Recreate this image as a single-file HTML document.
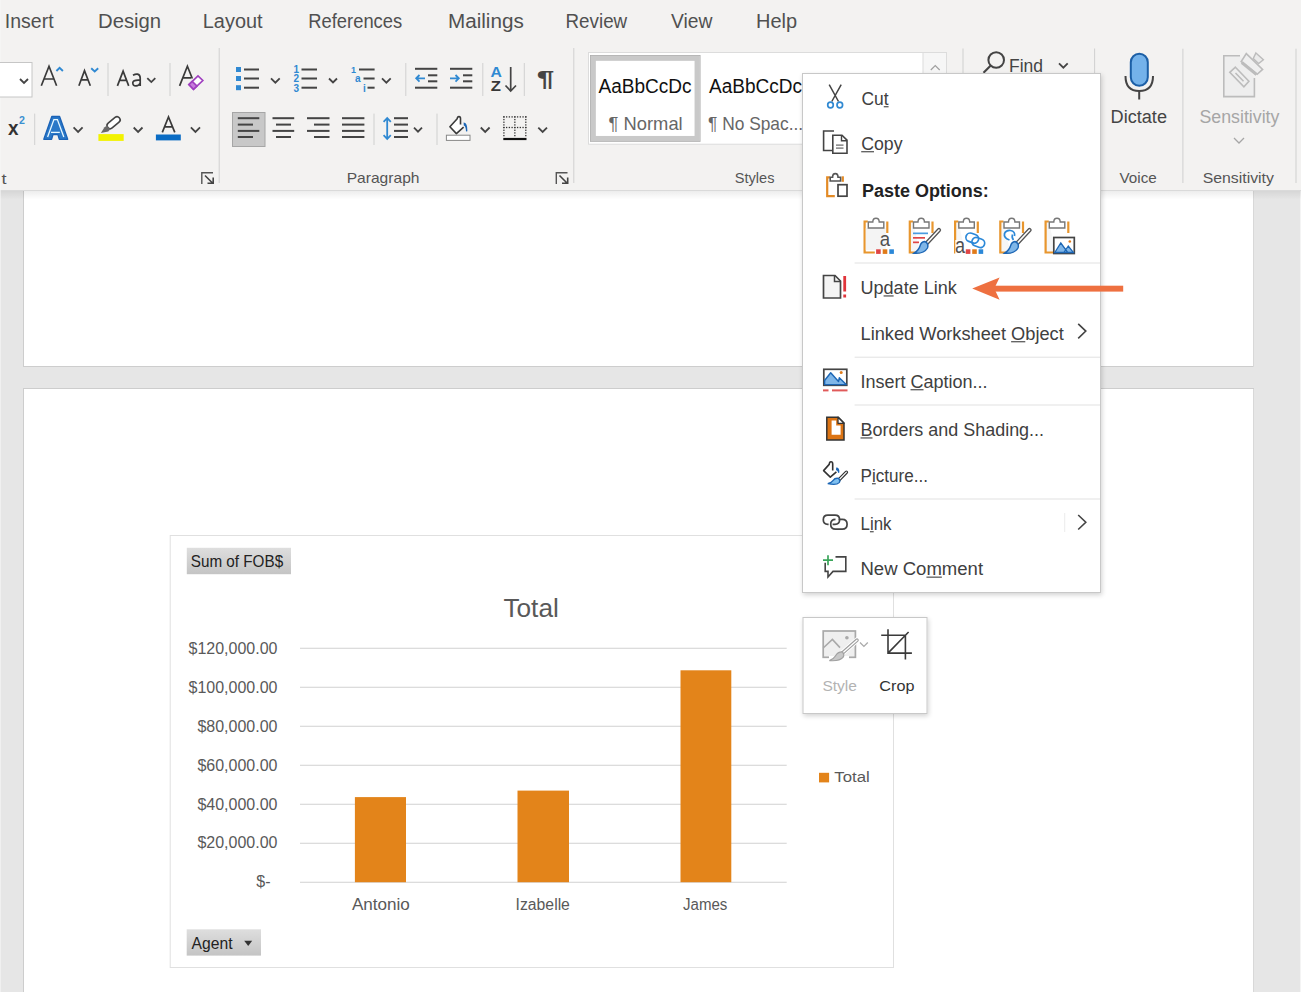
<!DOCTYPE html>
<html><head><meta charset="utf-8"><title>Word - Update Link</title>
<style>
html,body{margin:0;padding:0;width:1301px;height:992px;overflow:hidden;background:#e6e6e6;}
svg{display:block;font-family:"Liberation Sans",sans-serif;}
</style></head><body>
<svg width="1301" height="992" viewBox="0 0 1301 992">
<rect x="0" y="0" width="1301" height="992" fill="#e6e6e6"/>
<rect x="0" y="0" width="1301" height="190" fill="#f3f2f1"/>
<rect x="23" y="185" width="1231" height="182" fill="#cdcdcd"/><rect x="24" y="185" width="1229" height="181" fill="#fff"/><rect x="1253" y="185" width="1" height="182" fill="#d8d8d8"/>
<rect x="23" y="388" width="1231" height="620" fill="#cdcdcd"/><rect x="24" y="389" width="1229" height="620" fill="#fff"/><rect x="1253" y="389" width="1" height="620" fill="#d8d8d8"/>
<rect x="1300" y="190" width="1" height="802" fill="#f4f4f4"/>
<defs><linearGradient id="rsh" x1="0" y1="0" x2="0" y2="1"><stop offset="0" stop-color="#000" stop-opacity="0.07"/><stop offset="1" stop-color="#000" stop-opacity="0"/></linearGradient><linearGradient id="btn" x1="0" y1="0" x2="0" y2="1"><stop offset="0" stop-color="#dedede"/><stop offset="1" stop-color="#c4c4c4"/></linearGradient><filter id="msh" x="-10%" y="-10%" width="120%" height="120%"><feGaussianBlur in="SourceAlpha" stdDeviation="2.5"/><feOffset dx="1" dy="2"/><feComponentTransfer><feFuncA type="linear" slope="0.18"/></feComponentTransfer><feMerge><feMergeNode/><feMergeNode in="SourceGraphic"/></feMerge></filter></defs>
<rect x="0" y="191" width="1301" height="8.5" fill="url(#rsh)"/>
<rect x="0" y="0" width="1301" height="190" fill="#f3f2f1"/>
<rect x="0" y="190" width="1301" height="1" fill="#dadada"/>
<rect x="0" y="0" width="1" height="992" fill="#f6f6f6" opacity="0.6"/>
<rect x="170.2" y="535.5" width="723.3" height="432" fill="#fff" stroke="#e0e0e0" stroke-width="1"/>
<rect x="186.8" y="547.8" width="104.2" height="26.4" fill="url(#btn)"/>
<rect x="186.7" y="929.3" width="74.3" height="26.3" fill="url(#btn)"/>
<polygon points="244.2,940.8 252.2,940.8 248.2,946" fill="#333"/>
<rect x="300" y="647.70" width="486.7" height="1.2" fill="#d9d9d9"/>
<rect x="300" y="686.70" width="486.7" height="1.2" fill="#d9d9d9"/>
<rect x="300" y="725.70" width="486.7" height="1.2" fill="#d9d9d9"/>
<rect x="300" y="764.70" width="486.7" height="1.2" fill="#d9d9d9"/>
<rect x="300" y="803.70" width="486.7" height="1.2" fill="#d9d9d9"/>
<rect x="300" y="842.70" width="486.7" height="1.2" fill="#d9d9d9"/>
<rect x="300" y="881.70" width="486.7" height="1.2" fill="#d9d9d9"/>
<rect x="354.9" y="797.1" width="51.1" height="85.1" fill="#e3841a"/>
<rect x="517.5" y="790.6" width="51.5" height="91.6" fill="#e3841a"/>
<rect x="680.5" y="670.3" width="50.8" height="211.9" fill="#e3841a"/>
<rect x="819" y="772.8" width="10.1" height="9.6" fill="#e3841a"/>
<rect x="-1" y="62.5" width="33" height="34.5" fill="#fff" stroke="#c6c6c6" stroke-width="1"/>
<polyline points="20,79.0 24.0,83.0 28,79.0" fill="none" stroke="#444" stroke-width="1.8"/>
<path d="M41.3,85.8 L49,66.3 L56.6,85.8 M44.2,79 H53.8" fill="none" stroke="#3a3a3a" stroke-width="1.7" stroke-linejoin="miter"/>
<polyline points="56.4,71 59.6,67.8 62.9,71" fill="none" stroke="#3089d2" stroke-width="1.9"/>
<path d="M78.9,85.8 L84.5,70.7 L90.3,85.8 M81.2,79.8 H87.9" fill="none" stroke="#3a3a3a" stroke-width="1.7" stroke-linejoin="miter"/>
<polyline points="91.2,68.3 94.7,71.5 98.2,68.3" fill="none" stroke="#3089d2" stroke-width="1.9"/>
<path d="M117.4,85.9 L123.1,71.2 L128.7,85.9 M119.6,80.4 H126.6" fill="none" stroke="#3a3a3a" stroke-width="1.7" stroke-linejoin="miter"/>
<path d="M133,75.3 Q135.5,73.8 137.5,74.1 Q140.2,74.6 140.2,78 V85.9 M140.2,80.2 Q133.3,79.6 132.8,82.6 Q132.6,85.9 136,85.9 Q139,85.8 140.2,83" fill="none" stroke="#3a3a3a" stroke-width="1.7" stroke-linejoin="miter"/>
<rect x="107.5" y="63" width="1" height="33" fill="#d0d0d0"/>
<polyline points="147.3,78.1 151.3,82.1 155.3,78.1" fill="none" stroke="#444" stroke-width="1.8"/>
<rect x="169.5" y="63" width="1" height="33" fill="#d0d0d0"/>
<path d="M179.6,85.9 L187.4,66.2 L192.3,78.5 M182.5,77.9 H191" fill="none" stroke="#3a3a3a" stroke-width="1.7" stroke-linejoin="miter"/>
<polygon points="188.9,84.6 198,75.9 202.8,80.5 193.5,89.4" fill="#fff" stroke="#a040c0" stroke-width="1.7"/>
<polygon points="188.9,84.6 192.2,81.5 196.9,86 193.5,89.4" fill="#c77ddc" stroke="#a040c0" stroke-width="1.7"/>
<rect x="218.7" y="48" width="1" height="135" fill="#d0d0d0"/>
<rect x="236" y="67.0" width="5" height="5" fill="#3089d2"/>
<rect x="244" y="68.5" width="15" height="2" fill="#444"/>
<rect x="236" y="76.0" width="5" height="5" fill="#3089d2"/>
<rect x="244" y="77.5" width="15" height="2" fill="#444"/>
<rect x="236" y="85.2" width="5" height="5" fill="#3089d2"/>
<rect x="244" y="86.7" width="15" height="2" fill="#444"/>
<polyline points="271,78.325 275.35,82.675 279.7,78.325" fill="none" stroke="#444" stroke-width="1.8"/>
<text x="293.5" y="73.3" font-size="10" font-weight="700" fill="#3089d2" font-family="Liberation Sans">1</text>
<rect x="301.5" y="68.5" width="15.5" height="2" fill="#444"/>
<text x="293.5" y="82.3" font-size="10" font-weight="700" fill="#3089d2" font-family="Liberation Sans">2</text>
<rect x="301.5" y="77.5" width="15.5" height="2" fill="#444"/>
<text x="293.5" y="91.5" font-size="10" font-weight="700" fill="#3089d2" font-family="Liberation Sans">3</text>
<rect x="301.5" y="86.7" width="15.5" height="2" fill="#444"/>
<polyline points="329,78.5 333.0,82.5 337,78.5" fill="none" stroke="#444" stroke-width="1.8"/>
<text x="351" y="72.5" font-size="9" font-weight="700" fill="#3089d2" font-family="Liberation Sans">1</text>
<text x="355" y="82" font-size="10" font-weight="700" fill="#3089d2" font-family="Liberation Sans">a</text>
<text x="363" y="91.5" font-size="10" font-weight="700" fill="#3089d2" font-family="Liberation Sans">i</text>
<rect x="359" y="68.5" width="15.600000000000023" height="2" fill="#444"/>
<rect x="363.5" y="77.5" width="11.100000000000023" height="2" fill="#444"/>
<rect x="367.5" y="86.7" width="7.100000000000023" height="2" fill="#444"/>
<polyline points="382,78.325 386.35,82.675 390.7,78.325" fill="none" stroke="#444" stroke-width="1.8"/>
<rect x="405.3" y="63" width="1" height="33" fill="#d0d0d0"/>
<rect x="415" y="67.8" width="22.30000000000001" height="2" fill="#444"/>
<rect x="428" y="74.3" width="9.300000000000011" height="2" fill="#444"/>
<rect x="428" y="80.3" width="9.300000000000011" height="2" fill="#444"/>
<rect x="415" y="86.7" width="22.30000000000001" height="2" fill="#444"/>
<path d="M425,78.3 H416.5 M419.5,75 L416.2,78.3 L419.5,81.6" fill="none" stroke="#3089d2" stroke-width="1.8"/>
<rect x="450" y="67.8" width="22.30000000000001" height="2" fill="#444"/>
<rect x="463" y="74.3" width="9.300000000000011" height="2" fill="#444"/>
<rect x="463" y="80.3" width="9.300000000000011" height="2" fill="#444"/>
<rect x="450" y="86.7" width="22.30000000000001" height="2" fill="#444"/>
<path d="M450,78.3 H458.5 M455.5,75 L458.8,78.3 L455.5,81.6" fill="none" stroke="#3089d2" stroke-width="1.8"/>
<rect x="482.3" y="63" width="1" height="33" fill="#d0d0d0"/>
<path d="M510.7,67 V91 M505.5,85.5 L510.7,91 L516,85.5" fill="none" stroke="#444" stroke-width="1.7"/>
<rect x="523.8" y="63" width="1" height="33" fill="#d0d0d0"/>
<rect x="573.3" y="48" width="1" height="135" fill="#d0d0d0"/>
<rect x="34.2" y="113.6" width="1" height="31.400000000000006" fill="#d0d0d0"/>
<path d="M43.8,139.3 L51.8,116.5 H59.6 L67.7,139.3 H59.3 L57.9,134.6 H53 L51.6,139.3 Z" fill="#2a78c8" stroke="#1a62b6" stroke-width="1.3" stroke-linejoin="round"/>
<path d="M47.6,137 L53.9,119.6 H57.4 L63.8,137 M51,132.3 H59.8" fill="none" stroke="#e6f7ff" stroke-width="1.3"/>
<polyline points="73.6,127.44999999999999 78.1,131.95 82.6,127.44999999999999" fill="none" stroke="#444" stroke-width="1.8"/>
<g transform="translate(113.6,122.7) rotate(-40)"><rect x="-7.5" y="-3.1" width="15" height="6.2" rx="3" fill="#fff" stroke="#444" stroke-width="1.6"/></g>
<polygon points="100.9,132.9 104.5,127.2 107,125.4 110.2,129.2 108.3,131.5" fill="#6a6a6a"/>
<rect x="98.4" y="134.1" width="25.3" height="6.8" fill="#f2f200"/>
<polyline points="133.7,127.49999999999999 138.1,131.89999999999998 142.5,127.49999999999999" fill="none" stroke="#444" stroke-width="1.8"/>
<path d="M162.3,132.4 L168.5,116.9 L174.8,132.4 M164.8,126.9 H172.3" fill="none" stroke="#3a3a3a" stroke-width="1.7" stroke-linejoin="miter"/>
<rect x="155.9" y="134.5" width="24.9" height="5.9" fill="#0a6cc4"/>
<polyline points="190.9,127.42499999999998 195.45,131.975 200,127.42499999999998" fill="none" stroke="#444" stroke-width="1.8"/>
<path d="M201.8,184 V172.8 H213" fill="none" stroke="#555" stroke-width="1.4"/><path d="M205,175.5 L212.5,183 M207.5,183.2 H213.2 V177.5" fill="none" stroke="#444" stroke-width="1.6"/>
<path d="M556.3,184 V172.8 H567.5" fill="none" stroke="#555" stroke-width="1.4"/><path d="M559.5,175.5 L567.0,183 M562.0,183.2 H567.7 V177.5" fill="none" stroke="#444" stroke-width="1.6"/>
<rect x="232.5" y="112.5" width="32.5" height="34" fill="#c8c8c8" stroke="#a6a6a6" stroke-width="1"/>
<rect x="237.8" y="117.2" width="21.5" height="2" fill="#444"/>
<rect x="272.5" y="117.2" width="21.69999999999999" height="2" fill="#444"/>
<rect x="307" y="117.2" width="22.5" height="2" fill="#444"/>
<rect x="342" y="117.2" width="22.399999999999977" height="2" fill="#444"/>
<rect x="394" y="117.2" width="14" height="2" fill="#444"/>
<rect x="237.8" y="123.6" width="15.199999999999989" height="2" fill="#444"/>
<rect x="276" y="123.6" width="15" height="2" fill="#444"/>
<rect x="314" y="123.6" width="15.5" height="2" fill="#444"/>
<rect x="342" y="123.6" width="22.399999999999977" height="2" fill="#444"/>
<rect x="394" y="123.6" width="14" height="2" fill="#444"/>
<rect x="237.8" y="129.9" width="21.5" height="2" fill="#444"/>
<rect x="272.5" y="129.9" width="21.69999999999999" height="2" fill="#444"/>
<rect x="307" y="129.9" width="22.5" height="2" fill="#444"/>
<rect x="342" y="129.9" width="22.399999999999977" height="2" fill="#444"/>
<rect x="394" y="129.9" width="14" height="2" fill="#444"/>
<rect x="237.8" y="136.0" width="15.199999999999989" height="2" fill="#444"/>
<rect x="276" y="136.0" width="15" height="2" fill="#444"/>
<rect x="314" y="136.0" width="15.5" height="2" fill="#444"/>
<rect x="342" y="136.0" width="22.399999999999977" height="2" fill="#444"/>
<rect x="394" y="136.0" width="14" height="2" fill="#444"/>
<rect x="373.5" y="113.6" width="1" height="31.400000000000006" fill="#d0d0d0"/>
<path d="M387.2,118 V139 M383.6,121.8 L387.2,118 L390.8,121.8 M383.6,135.2 L387.2,139 L390.8,135.2" fill="none" stroke="#3089d2" stroke-width="1.8"/>
<polyline points="414,127.69999999999999 418.0,131.7 422,127.69999999999999" fill="none" stroke="#444" stroke-width="1.8"/>
<rect x="436.5" y="113.6" width="1" height="31.400000000000006" fill="#d0d0d0"/>
<path d="M460.5,124.4 V118.6 Q460.5,116.6 459,116.6 Q457.4,116.6 457.2,118.8 L449.9,126.8 L456.4,133.6 L463.6,127.2" fill="#fff" stroke="#3a3a3a" stroke-width="1.6" stroke-linejoin="round"/>
<path d="M463.6,122.4 Q467.6,122.4 467.4,131.2 L466,131.6 Q465.8,126 463.8,125.6 Z" fill="#1c66b5"/>
<rect x="446.4" y="135.2" width="23.6" height="5.2" fill="#fff" stroke="#888" stroke-width="1"/>
<polyline points="480.8,127.49999999999999 485.20000000000005,131.89999999999998 489.6,127.49999999999999" fill="none" stroke="#444" stroke-width="1.8"/>
<g fill="#333"><rect x="503.25" y="116.25" width="1.3" height="1.3"/><rect x="505.99" y="116.25" width="1.3" height="1.3"/><rect x="508.73" y="116.25" width="1.3" height="1.3"/><rect x="511.46" y="116.25" width="1.3" height="1.3"/><rect x="514.20" y="116.25" width="1.3" height="1.3"/><rect x="516.94" y="116.25" width="1.3" height="1.3"/><rect x="519.67" y="116.25" width="1.3" height="1.3"/><rect x="522.41" y="116.25" width="1.3" height="1.3"/><rect x="525.15" y="116.25" width="1.3" height="1.3"/><rect x="503.25" y="116.25" width="1.3" height="1.3"/><rect x="525.15" y="116.25" width="1.3" height="1.3"/><rect x="514.20" y="116.25" width="1.3" height="1.3"/><rect x="503.25" y="118.92" width="1.3" height="1.3"/><rect x="525.15" y="118.92" width="1.3" height="1.3"/><rect x="514.20" y="118.92" width="1.3" height="1.3"/><rect x="503.25" y="121.59" width="1.3" height="1.3"/><rect x="525.15" y="121.59" width="1.3" height="1.3"/><rect x="514.20" y="121.59" width="1.3" height="1.3"/><rect x="503.25" y="124.26" width="1.3" height="1.3"/><rect x="525.15" y="124.26" width="1.3" height="1.3"/><rect x="514.20" y="124.26" width="1.3" height="1.3"/><rect x="503.25" y="126.94" width="1.3" height="1.3"/><rect x="525.15" y="126.94" width="1.3" height="1.3"/><rect x="514.20" y="126.94" width="1.3" height="1.3"/><rect x="503.25" y="129.61" width="1.3" height="1.3"/><rect x="525.15" y="129.61" width="1.3" height="1.3"/><rect x="514.20" y="129.61" width="1.3" height="1.3"/><rect x="503.25" y="132.28" width="1.3" height="1.3"/><rect x="525.15" y="132.28" width="1.3" height="1.3"/><rect x="514.20" y="132.28" width="1.3" height="1.3"/><rect x="503.25" y="134.95" width="1.3" height="1.3"/><rect x="525.15" y="134.95" width="1.3" height="1.3"/><rect x="514.20" y="134.95" width="1.3" height="1.3"/><rect x="503.25" y="126.85" width="1.3" height="1.3"/><rect x="505.99" y="126.85" width="1.3" height="1.3"/><rect x="508.73" y="126.85" width="1.3" height="1.3"/><rect x="511.46" y="126.85" width="1.3" height="1.3"/><rect x="514.20" y="126.85" width="1.3" height="1.3"/><rect x="516.94" y="126.85" width="1.3" height="1.3"/><rect x="519.67" y="126.85" width="1.3" height="1.3"/><rect x="522.41" y="126.85" width="1.3" height="1.3"/><rect x="525.15" y="126.85" width="1.3" height="1.3"/></g>
<rect x="503.3" y="137.9" width="23.2" height="2.2" fill="#111"/>
<polyline points="538.3,127.52499999999998 542.65,131.875 547,127.52499999999998" fill="none" stroke="#444" stroke-width="1.8"/>
<rect x="588.5" y="52.5" width="358" height="91.7" fill="#fff" stroke="#dcdcdc" stroke-width="1"/>
<rect x="923" y="52.5" width="23.5" height="30" fill="#f6f6f6" stroke="#dcdcdc" stroke-width="1"/>
<polyline points="930.8,70 935.25,65.5 939.7,70" fill="none" stroke="#a0a0a0" stroke-width="1.2"/>
<rect x="590.5" y="55.5" width="109.5" height="85.8" fill="#fff" stroke="#a9a9a9" stroke-width="1"/>
<rect x="593.2" y="58.2" width="104" height="80.4" fill="none" stroke="#c9c9c9" stroke-width="5.3"/>
<rect x="962.5" y="48.5" width="1" height="134.5" fill="#d0d0d0"/>
<circle cx="996.2" cy="60" r="7.8" fill="none" stroke="#444" stroke-width="2"/>
<path d="M990.5,65.8 L983.5,72.8" stroke="#444" stroke-width="2.2"/>
<polyline points="1059,63.32499999999999 1063.35,67.67500000000001 1067.7,63.32499999999999" fill="none" stroke="#444" stroke-width="1.8"/>
<rect x="1094.1" y="48.5" width="1" height="134.5" fill="#d0d0d0"/>
<rect x="1130.8" y="53.7" width="17" height="32" rx="8.5" fill="#74b2ea" stroke="#1c5fa6" stroke-width="2"/>
<path d="M1125.5,76 Q1125.5,91 1139.2,91 Q1153,91 1153,76" fill="none" stroke="#444" stroke-width="2"/>
<rect x="1138.2" y="91" width="2" height="8.5" fill="#444"/>
<rect x="1182.4" y="48.7" width="1" height="134.3" fill="#d0d0d0"/>
<path d="M1240,55.8 H1223.8 V96.6 H1254.4 V78" fill="#eeeeee" stroke="#bcbcbc" stroke-width="1.6"/>
<polygon points="1235.4,67.2 1248.9,81.3 1243.9,86.9 1229.8,72.4" fill="#efefef" stroke="#bcbcbc" stroke-width="1.6"/>
<path d="M1235.5,73 L1243.5,81.3" stroke="#bcbcbc" stroke-width="1.6"/>
<polygon points="1246.3,53.6 1262.6,69.4 1257.2,74.3 1241.2,61.5" fill="#efefef" stroke="#bcbcbc" stroke-width="1.6"/>
<path d="M1241.8,62.5 L1256.5,74.5" stroke="#bcbcbc" stroke-width="3"/>
<polygon points="1255.9,52.9 1263.4,59.8 1258.6,63.6 1253.2,58.6" fill="#ebebeb" stroke="#bcbcbc" stroke-width="1.4"/>
<polyline points="1234,138.0 1239.0,143.0 1244,138.0" fill="none" stroke="#a6a6a6" stroke-width="1.3"/>
<rect x="1295.5" y="48.7" width="1" height="134.3" fill="#d0d0d0"/>
<text x="4.83" y="28.00" font-size="20" font-weight="400" fill="#505050" textLength="48.74" lengthAdjust="spacingAndGlyphs">Insert</text>
<text x="97.99" y="28.00" font-size="20" font-weight="400" fill="#505050" textLength="63.15" lengthAdjust="spacingAndGlyphs">Design</text>
<text x="202.80" y="28.00" font-size="20" font-weight="400" fill="#505050" textLength="59.75" lengthAdjust="spacingAndGlyphs">Layout</text>
<text x="308.28" y="28.00" font-size="20" font-weight="400" fill="#505050" textLength="93.92" lengthAdjust="spacingAndGlyphs">References</text>
<text x="447.97" y="28.00" font-size="20" font-weight="400" fill="#505050" textLength="75.83" lengthAdjust="spacingAndGlyphs">Mailings</text>
<text x="565.56" y="28.00" font-size="20" font-weight="400" fill="#505050" textLength="61.62" lengthAdjust="spacingAndGlyphs">Review</text>
<text x="671.00" y="28.00" font-size="20" font-weight="400" fill="#505050" textLength="41.46" lengthAdjust="spacingAndGlyphs">View</text>
<text x="756.00" y="28.00" font-size="20" font-weight="400" fill="#505050" textLength="41.12" lengthAdjust="spacingAndGlyphs">Help</text>
<text x="1.40" y="183.50" font-size="14.5" font-weight="400" fill="#555555" textLength="5.04" lengthAdjust="spacingAndGlyphs">t</text>
<text x="346.73" y="183.30" font-size="14.5" font-weight="400" fill="#555555" textLength="72.74" lengthAdjust="spacingAndGlyphs">Paragraph</text>
<text x="734.80" y="183.30" font-size="14.5" font-weight="400" fill="#555555" textLength="39.65" lengthAdjust="spacingAndGlyphs">Styles</text>
<text x="1119.50" y="183.30" font-size="14.5" font-weight="400" fill="#555555" textLength="37.27" lengthAdjust="spacingAndGlyphs">Voice</text>
<text x="1202.70" y="183.30" font-size="14.5" font-weight="400" fill="#555555" textLength="71.18" lengthAdjust="spacingAndGlyphs">Sensitivity</text>
<text x="598.50" y="92.60" font-size="20" font-weight="400" fill="#111" textLength="93.10" lengthAdjust="spacingAndGlyphs">AaBbCcDc</text>
<text x="608.60" y="129.50" font-size="19" font-weight="400" fill="#666" textLength="74.08" lengthAdjust="spacingAndGlyphs">¶ Normal</text>
<text x="709.00" y="92.60" font-size="20" font-weight="400" fill="#111" textLength="93.00" lengthAdjust="spacingAndGlyphs">AaBbCcDc</text>
<text x="708.00" y="129.50" font-size="19" font-weight="400" fill="#666" textLength="95.17" lengthAdjust="spacingAndGlyphs">¶ No Spac...</text>
<text x="1009.05" y="71.50" font-size="18.5" font-weight="400" fill="#444" textLength="34.02" lengthAdjust="spacingAndGlyphs">Find</text>
<text x="1110.59" y="123.00" font-size="18" font-weight="400" fill="#444" textLength="56.42" lengthAdjust="spacingAndGlyphs">Dictate</text>
<text x="1199.50" y="123.00" font-size="18" font-weight="400" fill="#a6a6a6" textLength="79.90" lengthAdjust="spacingAndGlyphs">Sensitivity</text>
<text x="190.80" y="567.40" font-size="17" font-weight="400" fill="#222" textLength="92.31" lengthAdjust="spacingAndGlyphs">Sum of FOB$</text>
<text x="503.40" y="616.70" font-size="25" font-weight="400" fill="#595959" textLength="55.43" lengthAdjust="spacingAndGlyphs">Total</text>
<text x="188.52" y="653.70" font-size="16" font-weight="400" fill="#595959" textLength="88.98" lengthAdjust="spacingAndGlyphs">$120,000.00</text>
<text x="188.52" y="692.65" font-size="16" font-weight="400" fill="#595959" textLength="88.98" lengthAdjust="spacingAndGlyphs">$100,000.00</text>
<text x="197.42" y="731.60" font-size="16" font-weight="400" fill="#595959" textLength="80.08" lengthAdjust="spacingAndGlyphs">$80,000.00</text>
<text x="197.42" y="770.55" font-size="16" font-weight="400" fill="#595959" textLength="80.08" lengthAdjust="spacingAndGlyphs">$60,000.00</text>
<text x="197.42" y="809.50" font-size="16" font-weight="400" fill="#595959" textLength="80.08" lengthAdjust="spacingAndGlyphs">$40,000.00</text>
<text x="197.42" y="848.45" font-size="16" font-weight="400" fill="#595959" textLength="80.08" lengthAdjust="spacingAndGlyphs">$20,000.00</text>
<text x="256.30" y="887.40" font-size="16" font-weight="400" fill="#595959" textLength="14.23" lengthAdjust="spacingAndGlyphs">$-</text>
<text x="351.90" y="910.40" font-size="16" font-weight="400" fill="#595959" textLength="57.99" lengthAdjust="spacingAndGlyphs">Antonio</text>
<text x="515.62" y="910.40" font-size="16" font-weight="400" fill="#595959" textLength="54.28" lengthAdjust="spacingAndGlyphs">Izabelle</text>
<text x="683.00" y="910.40" font-size="16" font-weight="400" fill="#595959" textLength="44.40" lengthAdjust="spacingAndGlyphs">James</text>
<text x="834.30" y="782.40" font-size="15.5" font-weight="400" fill="#595959" textLength="35.48" lengthAdjust="spacingAndGlyphs">Total</text>
<text x="191.60" y="949.10" font-size="17" font-weight="400" fill="#222" textLength="40.94" lengthAdjust="spacingAndGlyphs">Agent</text>
<text x="490.49" y="77.30" font-size="14.86" font-weight="700" fill="#3089d2" textLength="11.36" lengthAdjust="spacingAndGlyphs">A</text>
<text x="490.67" y="91.40" font-size="15.22" font-weight="700" fill="#383838" textLength="10.18" lengthAdjust="spacingAndGlyphs">Z</text>
<text x="536.75" y="85.57" font-size="22.56" font-weight="700" fill="#444" textLength="17.57" lengthAdjust="spacingAndGlyphs">¶</text>
<text x="8.10" y="134.80" font-size="20.93" font-weight="700" fill="#333" textLength="10.52" lengthAdjust="spacingAndGlyphs">x</text>
<text x="19.08" y="124.10" font-size="11.57" font-weight="700" fill="#3a90d0" textLength="5.90" lengthAdjust="spacingAndGlyphs">2</text>
<g filter="url(#msh)"><rect x="802.5" y="73.5" width="298" height="519" fill="#fff" stroke="#c8c8c8" stroke-width="1"/></g>
<rect x="854.6" y="262.5" width="245.4" height="1" fill="#e1e1e1"/>
<rect x="854.6" y="356.7" width="245.4" height="1" fill="#e1e1e1"/>
<rect x="854.6" y="404.5" width="245.4" height="1" fill="#e1e1e1"/>
<rect x="854.6" y="498.5" width="245.4" height="1" fill="#e1e1e1"/>
<polyline points="1078.2,323.8 1085.8,331.05 1078.2,338.3" fill="none" stroke="#444" stroke-width="1.6"/>
<polyline points="1078.2,515 1085.8,522.25 1078.2,529.5" fill="none" stroke="#444" stroke-width="1.6"/>
<rect x="1064.2" y="513" width="1" height="19" fill="#ececec"/>
<path d="M829.2,84.6 L838.5,101.5 M841.2,84.6 L831.8,101.5" stroke="#444" stroke-width="1.5" fill="none"/>
<circle cx="830.5" cy="105" r="2.8" fill="none" stroke="#3089d2" stroke-width="1.7"/><circle cx="839.8" cy="105" r="2.8" fill="none" stroke="#3089d2" stroke-width="1.7"/>
<path d="M834,131 H823.6 V150.5 H832" fill="none" stroke="#444" stroke-width="1.6"/>
<path d="M832.8,135.2 H842 L847,140.2 V153.2 H832.8 Z" fill="#fff" stroke="#444" stroke-width="1.6"/><path d="M841.5,135.2 V140.7 H847" fill="none" stroke="#444" stroke-width="1.4"/>
<rect x="836" y="144.5" width="7.5" height="1.2" fill="#666"/><rect x="836" y="147.5" width="7.5" height="1.2" fill="#666"/>
<path d="M829.8,177.3 H827.2 V196.2 H834.8" fill="none" stroke="#e38a25" stroke-width="2.2"/>
<path d="M842.8,176.3 V181.8" stroke="#e38a25" stroke-width="2.2"/>
<path d="M830.2,181 V177.2 H832.6 Q832.6,173.6 835.3,173.6 Q838,173.6 838,177.2 H840.6 V181 Z" fill="#fff" stroke="#555" stroke-width="1.6"/>
<rect x="838" y="184.7" width="9" height="11.5" fill="#fff" stroke="#444" stroke-width="1.7"/>
<path d="M867.8,221.5 H864.5999999999999 V252.5 H874.8" fill="none" stroke="#e8962e" stroke-width="2.2"/><path d="M887.3,221.5 V233" stroke="#e8962e" stroke-width="2.2"/>
<rect x="865.8" y="228" width="20" height="22" fill="#f4f4f4"/>
<path d="M868.3,228 V222 H872.8 Q872.8,218.3 876.0,218.3 Q879.1999999999999,218.3 879.1999999999999,222 H883.8 V228 Z" fill="#fff" stroke="#777" stroke-width="1.4"/>
<rect x="876.1" y="249.3" width="4.6" height="4.6" fill="#e04545"/>
<rect x="882.7" y="249.3" width="4.6" height="4.6" fill="#e07b1a"/>
<rect x="889.3" y="249.3" width="4.6" height="4.6" fill="#2b88d8"/>
<path d="M913,221.5 H909.8 V252.5 H920" fill="#f6f6f6" stroke="#e8962e" stroke-width="2.2"/><path d="M932.5,221.5 V233" stroke="#e8962e" stroke-width="2.2"/><path d="M913.5,228 V222 H918 Q918,218.3 921.2,218.3 Q924.4,218.3 924.4,222 H929 V228 Z" fill="#fff" stroke="#777" stroke-width="1.4"/>
<rect x="913" y="232.5" width="15" height="1.7" fill="#4a9be0"/><rect x="913" y="237" width="12" height="1.7" fill="#e04545"/><rect x="913" y="241.5" width="6" height="1.7" fill="#e04545"/>
<path d="M939,230 L926,244" stroke="#555" stroke-width="4.2" stroke-linecap="round"/><path d="M939,230 L926,244" stroke="#fff" stroke-width="1.6" stroke-linecap="round"/>
<path d="M924.5,241.5 Q929,243 927.5,248 Q924,254 914,253.2 Q919,250 920,246 Q921,242 924.5,241.5 Z" fill="#7fb6e8" stroke="#1c66b5" stroke-width="1.4"/>
<path d="M958.3,221.5 H955.0999999999999 V252.5 H965.3" fill="#f6f6f6" stroke="#e8962e" stroke-width="2.2"/><path d="M977.8,221.5 V233" stroke="#e8962e" stroke-width="2.2"/><path d="M958.8,228 V222 H963.3 Q963.3,218.3 966.5,218.3 Q969.6999999999999,218.3 969.6999999999999,222 H974.3 V228 Z" fill="#fff" stroke="#777" stroke-width="1.4"/>
<rect x="955.3" y="240" width="10" height="14" fill="#fff"/>
<rect x="965.8" y="233.8" width="13" height="8.6" rx="4.3" fill="#fff" stroke="#2b88d8" stroke-width="1.7" transform="rotate(20 972.3 238)"/>
<rect x="971.8" y="238.2" width="13" height="8.6" rx="4.3" fill="none" stroke="#2b88d8" stroke-width="1.7" transform="rotate(20 978.3 242.5)"/>
<rect x="965.8" y="249.3" width="4.6" height="4.6" fill="#e04545"/>
<rect x="972.2" y="249.3" width="4.6" height="4.6" fill="#e07b1a"/>
<rect x="978.6" y="249.3" width="4.6" height="4.6" fill="#2b88d8"/>
<path d="M1003.5,221.5 H1000.3 V252.5 H1010.5" fill="#f6f6f6" stroke="#e8962e" stroke-width="2.2"/><path d="M1023.0,221.5 V233" stroke="#e8962e" stroke-width="2.2"/><path d="M1004.0,228 V222 H1008.5 Q1008.5,218.3 1011.7,218.3 Q1014.9,218.3 1014.9,222 H1019.5 V228 Z" fill="#fff" stroke="#777" stroke-width="1.4"/>
<path d="M1009.5,240 Q1003.5,238 1004.5,233.5 Q1006.0,230 1010.5,230.5 Q1015.5,231.5 1014.5,236" fill="none" stroke="#2b88d8" stroke-width="1.7"/>
<path d="M1012.5,234.5 Q1011.5,238 1013.5,240" fill="none" stroke="#2b88d8" stroke-width="1.7"/>
<path d="M1029.5,230 L1016.5,244" stroke="#555" stroke-width="4.2" stroke-linecap="round"/><path d="M1029.5,230 L1016.5,244" stroke="#fff" stroke-width="1.6" stroke-linecap="round"/>
<path d="M1015.0,241.5 Q1019.5,243 1018.0,248 Q1014.5,254 1004.5,253.2 Q1009.5,250 1010.5,246 Q1011.5,242 1015.0,241.5 Z" fill="#7fb6e8" stroke="#1c66b5" stroke-width="1.4"/>
<path d="M1048.8,221.5 H1045.6 V252.5 H1055.8" fill="#f6f6f6" stroke="#e8962e" stroke-width="2.2"/><path d="M1068.3,221.5 V233" stroke="#e8962e" stroke-width="2.2"/><path d="M1049.3,228 V222 H1053.8 Q1053.8,218.3 1057.0,218.3 Q1060.2,218.3 1060.2,222 H1064.8 V228 Z" fill="#fff" stroke="#777" stroke-width="1.4"/>
<rect x="1053.8" y="237.5" width="20.5" height="16" fill="#fff" stroke="#444" stroke-width="1.7"/>
<path d="M1054.8,252.5 L1060.8,243 L1067.8,252.5 Z M1063.8,252.5 L1068.3,246 L1073.5,252.5 Z" fill="#7fb6e8" stroke="#1c66b5" stroke-width="1.3"/>
<circle cx="1069.8" cy="241.5" r="1.3" fill="#e07b1a"/>
<path d="M823.5,275.5 H835 L840.5,281 V298 H823.5 Z" fill="#f4f4f4" stroke="#444" stroke-width="1.7"/><path d="M834.5,275.5 V281.5 H840.5" fill="none" stroke="#444" stroke-width="1.5"/>
<rect x="843.3" y="276" width="2.8" height="15.5" fill="#e0353b"/><rect x="843.3" y="294.5" width="2.8" height="3" fill="#e0353b"/>
<rect x="823.8" y="369.3" width="23" height="16" fill="#fff" stroke="#444" stroke-width="1.7"/>
<path d="M824.6,380.5 L830.7,372.8 L838.5,381.5 L839.3,377.8 L846.2,384.6 H824.6 Z" fill="#7fb6e8" stroke="#1c66b5" stroke-width="1.4" stroke-linejoin="round"/>
<circle cx="841.2" cy="372.6" r="1.5" fill="#e07b1a"/>
<rect x="823" y="389.4" width="5.5" height="2" fill="#e05a5a"/><rect x="832" y="389.4" width="15.5" height="2" fill="#e05a5a"/>
<path d="M826.8,417.3 H838.3 L844,423 V440 H826.8 Z" fill="#dc7414" stroke="#333" stroke-width="1.5"/>
<path d="M831.6,420.6 H836.2 V425.4 H840.6 V434.8 H831.6 Z" fill="#fff"/>
<path d="M838,417.3 V423.3 H844 Z" fill="#fff" stroke="#333" stroke-width="1.3" stroke-linejoin="round"/>
<path d="M832.7,470.4 V464 Q832.7,461.8 831,461.8 Q829.4,461.8 829.2,464.4 L823.6,470.6 L830.3,477.1 L836.4,471.8" fill="#fff" stroke="#333" stroke-width="1.6" stroke-linejoin="round"/>
<path d="M836.2,467.6 Q839.6,467.4 839.4,472.5 L838.2,473 Q837.8,470 836,470.2 Z" fill="#1c66b5"/>
<path d="M846.4,472.2 L838.8,480" stroke="#333" stroke-width="3.4" stroke-linecap="round"/><path d="M846.4,472.2 L838.8,480" stroke="#fff" stroke-width="1.1" stroke-linecap="round"/>
<path d="M838.6,478.4 Q840.8,480.4 839.2,482.6 Q836.4,485.6 827.8,483.6 Q831.8,482.6 833.2,480.4 Q835,477.6 838.6,478.4 Z" fill="#7fc0f0" stroke="#1c66b5" stroke-width="1.3"/>
<path d="M828.6,524.4 H827.9 Q823.3,524.4 823.3,519.8 Q823.3,515.2 827.9,515.2 H835 Q839.6,515.2 839.6,519.8 Q839.6,524.4 835,524.4 H832.6" fill="none" stroke="#444" stroke-width="1.7"/>
<path d="M838.6,519.4 H842.3 Q847.1,519.4 847.1,524.3 Q847.1,529.2 842.3,529.2 H835.5 Q830.7,529.2 830.7,524.3 Q830.7,519.4 835.5,519.4" fill="none" stroke="#444" stroke-width="1.7"/>
<path d="M825.2,562.8 V571.4 H828 V577 L833,571.4 H845.8 V556.9 H835.5" fill="none" stroke="#444" stroke-width="1.6" stroke-linejoin="miter"/>
<path d="M828,555.2 V565.2 M823,560.2 H833" stroke="#3aa55a" stroke-width="1.7"/>
<g filter="url(#msh)"><rect x="803" y="617.5" width="124" height="96" fill="#fff" stroke="#c8c8c8" stroke-width="1"/></g>
<rect x="823.2" y="631" width="32.2" height="26.3" fill="#efefef" stroke="#a9a9a9" stroke-width="1.7"/>
<path d="M823.2,648 L832.4,639.4 L840,647.6" fill="none" stroke="#a9a9a9" stroke-width="1.6"/><circle cx="846.9" cy="637.7" r="1.8" fill="#a9a9a9"/>
<rect x="829" y="656" width="20" height="4" fill="#fff"/>
<path d="M857.2,640 L842,653.4" stroke="#fff" stroke-width="5.5" stroke-linecap="round"/>
<path d="M857,640.2 L842,653.4" stroke="#a0a0a0" stroke-width="3.6" stroke-linecap="round"/><path d="M857,640.2 L842,653.4" stroke="#fff" stroke-width="1.3" stroke-linecap="round"/>
<path d="M842.6,652 Q844.8,654.8 843,657.4 Q839.6,661.4 829.4,660.6 Q833.6,659 835.4,656 Q838,651.6 842.6,652 Z" fill="#c8c8c8" stroke="#a0a0a0" stroke-width="1.2"/>
<polyline points="860,642.55 863.9,646.45 867.8,642.55" fill="none" stroke="#aaa" stroke-width="1.3"/>
<path d="M888,629.3 V653.1 H911.9 M881.2,635.3 H905.4 V659.5 M888,653.1 L908.6,632" fill="none" stroke="#3a3a3a" stroke-width="1.6"/>
<text x="822.40" y="690.50" font-size="15.5" font-weight="400" fill="#b3b3b3" textLength="34.52" lengthAdjust="spacingAndGlyphs">Style</text>
<text x="879.30" y="690.50" font-size="15.5" font-weight="400" fill="#333" textLength="35.15" lengthAdjust="spacingAndGlyphs">Crop</text>
<text x="861.50" y="105.00" font-size="18.3" font-weight="400" fill="#404040" textLength="27.08" lengthAdjust="spacingAndGlyphs">Cut</text>
<rect x="883.74" y="106.20" width="4.83" height="1.1" fill="#404040"/>
<text x="861.20" y="150.00" font-size="18.3" font-weight="400" fill="#404040" textLength="41.37" lengthAdjust="spacingAndGlyphs">Copy</text>
<rect x="861.20" y="151.20" width="12.80" height="1.1" fill="#404040"/>
<text x="862.02" y="197.00" font-size="18.3" font-weight="700" fill="#222" textLength="126.75" lengthAdjust="spacingAndGlyphs">Paste Options:</text>
<text x="860.51" y="294.20" font-size="18.3" font-weight="400" fill="#404040" textLength="96.34" lengthAdjust="spacingAndGlyphs">Update Link</text>
<rect x="883.59" y="295.40" width="10.04" height="1.1" fill="#404040"/>
<text x="860.50" y="340.00" font-size="18.3" font-weight="400" fill="#404040" textLength="203.28" lengthAdjust="spacingAndGlyphs">Linked Worksheet Object</text>
<rect x="1011.11" y="341.20" width="14.18" height="1.1" fill="#404040"/>
<text x="860.52" y="388.00" font-size="18.3" font-weight="400" fill="#404040" textLength="127.05" lengthAdjust="spacingAndGlyphs">Insert Caption...</text>
<rect x="910.53" y="389.20" width="13.00" height="1.1" fill="#404040"/>
<text x="860.52" y="436.20" font-size="18.3" font-weight="400" fill="#404040" textLength="183.54" lengthAdjust="spacingAndGlyphs">Borders and Shading...</text>
<rect x="860.52" y="437.40" width="11.97" height="1.1" fill="#404040"/>
<text x="860.57" y="482.00" font-size="18.3" font-weight="400" fill="#404040" textLength="67.44" lengthAdjust="spacingAndGlyphs">Picture...</text>
<rect x="871.97" y="483.20" width="3.80" height="1.1" fill="#404040"/>
<text x="860.58" y="530.00" font-size="18.3" font-weight="400" fill="#404040" textLength="30.93" lengthAdjust="spacingAndGlyphs">Link</text>
<rect x="869.95" y="531.20" width="3.75" height="1.1" fill="#404040"/>
<text x="860.49" y="575.40" font-size="18.3" font-weight="400" fill="#404040" textLength="122.59" lengthAdjust="spacingAndGlyphs">New Comment</text>
<rect x="926.42" y="576.60" width="15.44" height="1.1" fill="#404040"/>
<text x="879.85" y="246.49" font-size="20.91" font-weight="400" fill="#505050" textLength="10.37" lengthAdjust="spacingAndGlyphs">a</text>
<text x="954.88" y="253.29" font-size="21.27" font-weight="400" fill="#505050" textLength="10.05" lengthAdjust="spacingAndGlyphs">a</text>
<polygon points="972.2,288.6 999.6,277.4 994.3,288.6 999.6,299.8" fill="#ee7040"/>
<rect x="993" y="285.7" width="130.2" height="5.9" fill="#ee7040"/>
</svg>
</body></html>
